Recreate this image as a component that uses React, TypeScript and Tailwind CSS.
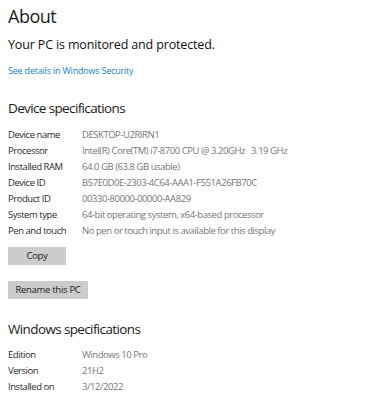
import React from "react";

const device: [string, string][] = [
  ["Device name", "DESKTOP-U2RIRN1"],
  ["Processor", "Intel(R) Core(TM) i7-8700 CPU @ 3.20GHz   3.19 GHz"],
  ["Installed RAM", "64.0 GB (63.8 GB usable)"],
  ["Device ID", "B57E0D0E-2303-4C64-AAA1-F551A26FB70C"],
  ["Product ID", "00330-80000-00000-AA829"],
  ["System type", "64-bit operating system, x64-based processor"],
  ["Pen and touch", "No pen or touch input is available for this display"],
];

const windows: [string, string][] = [
  ["Edition", "Windows 10 Pro"],
  ["Version", "21H2"],
  ["Installed on", "3/12/2022"],
];

function Row({ k, v }: { k: string; v: string }) {
  return (
    <div className="flex h-[16px] items-center text-[9.5px] leading-none tracking-[-0.45px]">
      <div className="w-[74px] shrink-0 text-[#2b2b2b]">{k}</div>
      <div className="whitespace-pre text-[#767676]">{v}</div>
    </div>
  );
}

export default function App() {
  return (
    <div
      className="w-[370px] h-[394px] overflow-hidden bg-white pl-[8px]"
      style={{ fontFamily: '"Open Sans", "Noto Sans", sans-serif' }}
    >
      <div className="h-[32px] pt-[3px] text-[18px] leading-[26px] tracking-[-0.5px] text-[#1a1a1a]">
        About
      </div>
      <div className="h-[24px] pt-[4px] text-[12.5px] leading-[18px] tracking-[-0.15px] text-[#111]">
        Your PC is monitored and protected.
      </div>
      <div className="h-[30px] pt-[8px] text-[9px] leading-[14px] tracking-[-0.2px] text-[#1a7fc9]">
        See details in Windows Security
      </div>
      <div className="h-[40px] pt-[12px] text-[13.5px] leading-[20px] tracking-[-0.63px] text-[#1a1a1a]">
        Device specifications
      </div>
      <div className="pt-[1px]">
        {device.map(([k, v]) => (
          <Row key={k} k={k} v={v} />
        ))}
      </div>
      <button className="mt-[8px] flex h-[18px] w-[58px] items-center justify-center bg-[#cccccc] text-[9.5px] tracking-[-0.3px] text-[#222]">
        Copy
      </button>
      <button className="mt-[16px] flex h-[18px] w-[80px] items-center justify-center bg-[#cccccc] text-[9.5px] tracking-[-0.3px] text-[#222]">
        Rename this PC
      </button>
      <div className="h-[40px] pt-[20px] text-[13.5px] leading-[20px] tracking-[-0.63px] text-[#1a1a1a]">
        Windows specifications
      </div>
      <div className="pt-[8px]">
        {windows.map(([k, v]) => (
          <Row key={k} k={k} v={v} />
        ))}
      </div>
    </div>
  );
}
